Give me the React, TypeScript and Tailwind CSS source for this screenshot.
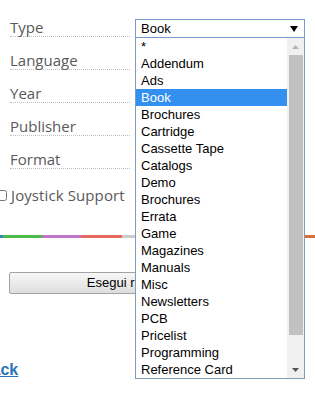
import React from 'react';

const FIELDS = ['Type', 'Language', 'Year', 'Publisher', 'Format'];

const OPTIONS = [
  '*',
  'Addendum',
  'Ads',
  'Book',
  'Brochures',
  'Cartridge',
  'Cassette Tape',
  'Catalogs',
  'Demo',
  'Brochures',
  'Errata',
  'Game',
  'Magazines',
  'Manuals',
  'Misc',
  'Newsletters',
  'PCB',
  'Pricelist',
  'Programming',
  'Reference Card',
];

function TypeSelect() {
  return (
    <div className="relative mt-[15px] w-[170px] h-[19px] border border-[#7a9bd0] bg-white flex items-center font-['Liberation_Sans',Arial,sans-serif] text-[13px] text-black">
      <span className="pl-[5px] leading-[17px]">Book</span>
      <svg className="absolute right-[6px] top-[6px]" width="8" height="6" viewBox="0 0 8 6">
        <path d="M0 0 L8 0 L4 6 Z" fill="#000" />
      </svg>

      {/* open option list */}
      <div className="absolute left-[-1px] top-[18px] w-[170px] h-[341px] border border-t-0 border-[#7f9db9] bg-white flex z-10">
        <ul className="flex-1">
          {OPTIONS.map((o, i) => (
            <li
              key={i}
              className={
                'h-[17px] leading-[17px] pl-[5px] whitespace-nowrap ' +
                (o === 'Book' && i === 3 ? 'bg-[#3390f0] text-white' : 'text-black')
              }
            >
              {o}
            </li>
          ))}
        </ul>
        <div className="w-[17px] bg-[#f0f0f0] flex flex-col items-center">
          <div className="h-[17px] flex items-center justify-center">
            <svg width="7" height="4" viewBox="0 0 7 4">
              <path d="M0 4 L7 4 L3.5 0 Z" fill="#b4b4b4" />
            </svg>
          </div>
          <div className="w-[14px] h-[280px] bg-[#c1c1c1]" />
          <div className="flex-1" />
          <div className="h-[17px] flex items-center justify-center">
            <svg width="7" height="4" viewBox="0 0 7 4">
              <path d="M0 0 L7 0 L3.5 4 Z" fill="#555" />
            </svg>
          </div>
        </div>
      </div>
    </div>
  );
}

export default function App() {
  return (
    <div className="relative w-[315px] h-[395px] overflow-hidden bg-white">
      <div className="pt-[4px] pl-[10px] font-['Open_Sans',sans-serif] text-[15px] text-[#595959]">
        {FIELDS.map((f, i) => (
          <div key={f} className="h-[33px] flex items-start gap-[5px]">
            <div className="w-[120px] h-[33px] border-b border-dotted border-[#bdbdbd] flex items-end">
              <span className="leading-[18px]">{f}</span>
            </div>
            {i === 0 && <TypeSelect />}
          </div>
        ))}

        <label className="mt-[17px] -ml-[14px] h-[18px] flex items-center gap-[4px]">
          <input type="checkbox" className="w-[11px] h-[11px] m-0 accent-[#888]" />
          <span className="leading-[18px] tracking-[0.1px]">Joystick Support</span>
        </label>
      </div>

      <div className="mt-[31px] h-[3px] flex">
        <div className="w-[3px] bg-[#3f7fc4]" />
        <div className="w-[39px] bg-[#4dbb4a]" />
        <div className="w-[39px] bg-[#c076c8]" />
        <div className="w-[41px] bg-[#e8675f]" />
        <div className="flex-1 bg-[#cccccc]" />
        <div className="w-[10px] bg-[#d9703c]" />
      </div>

      <div className="mt-[31px] pl-[9px]">
        <button className="w-[238px] h-[22px] border border-[#a3a3a3] rounded-[2px] bg-gradient-to-b from-[#f7f7f7] to-[#dedede] font-['Liberation_Sans',Arial,sans-serif] text-[13px] text-black">
          Esegui ricerca
        </button>
      </div>

      <div className="mt-[63px] -ml-[20px] h-[18px]">
        <a href="#" className="font-['Liberation_Sans',Arial,sans-serif] font-bold text-[16px] leading-[18px] text-[#2a74b8] underline">
          Back
        </a>
      </div>
    </div>
  );
}
